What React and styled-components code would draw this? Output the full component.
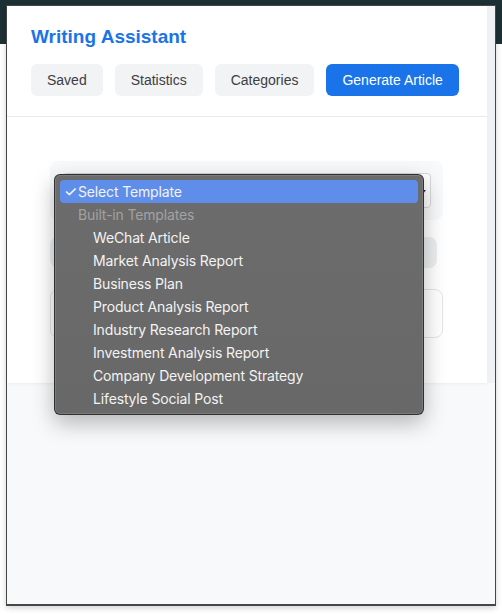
import React from 'react';
import styled, { createGlobalStyle } from 'styled-components';

const GlobalStyle = createGlobalStyle`
  html, body {
    margin: 0;
    padding: 0;
  }
  body {
    background: linear-gradient(#1d3034 0, #1d3034 44px, #ffffff 44px);
    font-family: "Liberation Sans", Arial, sans-serif;
    min-height: 614px;
  }
`;

const Window = styled.div`
  position: relative;
  box-sizing: border-box;
  width: 490px;
  height: 601px;
  margin: 5px 0 0 6px;
  border: 1px solid #474747;
  border-bottom-width: 2px;
  background: #f8f9fa;
  box-shadow: 0 2px 6px rgba(0, 0, 0, 0.18);
`;

const PanelRow = styled.div`
  display: flex;
`;

const Panel = styled.div`
  width: 480px;
  background: #ffffff;
  box-shadow: 0 1px 3px rgba(0, 0, 0, 0.05);
`;

const Gutter = styled.div`
  width: 8px;
  background: #eff1f4;
`;

const Header = styled.header`
  padding: 19px 24px 20px;
  border-bottom: 1px solid #e8eaed;
`;

const Title = styled.h1`
  margin: 0;
  font-size: 19px;
  line-height: 24px;
  font-weight: 700;
  color: #1a73e8;
`;

const Toolbar = styled.div`
  display: flex;
  gap: 12px;
  margin-top: 15px;
`;

const TabButton = styled.button`
  height: 32px;
  padding: 0 16px 1px;
  border: none;
  border-radius: 6px;
  font-family: "Liberation Sans", Arial, sans-serif;
  font-size: 14px;
  background: ${p => (p.$primary ? '#1a73e8' : '#f1f3f4')};
  color: ${p => (p.$primary ? '#ffffff' : '#3c4043')};
  cursor: pointer;
`;

const Content = styled.main`
  padding: 44px 44px 45px 43px;
  display: flex;
  flex-direction: column;
`;

const TemplateBox = styled.div`
  background: #f8f9fa;
  border-radius: 8px;
  padding: 12px;
`;

const SelectField = styled.div`
  position: relative;
  box-sizing: border-box;
  height: 35px;
  background: #ffffff;
  border: 1px solid #d5d7da;
  border-radius: 4px;

  &::after {
    content: '';
    position: absolute;
    right: 4px;
    top: 16px;
    border-left: 3px solid transparent;
    border-right: 3px solid transparent;
    border-top: 4px solid #333;
  }
`;

const ActionBar = styled.div`
  margin-top: 17px;
  width: 387px;
  height: 31px;
  border-radius: 8px;
  background: #eceef0;
`;

const InputBox = styled.div`
  box-sizing: border-box;
  margin-top: 21px;
  height: 49px;
  border: 1px solid #e3e5e8;
  border-radius: 8px;
  background: #ffffff;
`;

const Menu = styled.ul`
  position: absolute;
  left: 47px;
  top: 168px;
  box-sizing: border-box;
  width: 370px;
  margin: 0;
  padding: 5px 5px 4px;
  list-style: none;
  background: linear-gradient(#6c6c6c, #686868);
  border: 1px solid rgba(30, 30, 30, 0.75);
  border-radius: 6px;
  box-shadow: inset 0 0 0 1px rgba(255, 255, 255, 0.12), 0 8px 22px rgba(0, 0, 0, 0.28);
  font-family: Inter, "Noto Sans", sans-serif;
  font-size: 14px;
  letter-spacing: -0.15px;
`;

const MenuItem = styled.li`
  height: 23px;
  display: flex;
  align-items: center;
  border-radius: 4px;
  padding-left: ${p => (p.$kind === 'group' ? 18 : p.$kind === 'option' ? 33 : 4)}px;
  color: ${p => (p.$kind === 'group' ? '#a2a2a2' : '#f3f3f3')};
  background: ${p => (p.$active ? '#5e8ee9' : 'transparent')};
  white-space: nowrap;
`;

const Check = styled.span`
  width: 14px;
  font-size: 15px;
  color: #ffffff;
`;

const templates = [
  'WeChat Article',
  'Market Analysis Report',
  'Business Plan',
  'Product Analysis Report',
  'Industry Research Report',
  'Investment Analysis Report',
  'Company Development Strategy',
  'Lifestyle Social Post',
];

const tabs = ['Saved', 'Statistics', 'Categories'];

export default function App() {
  return (
    <>
      <GlobalStyle />
      <Window>
        <PanelRow>
          <Panel>
            <Header>
              <Title>Writing Assistant</Title>
              <Toolbar>
                {tabs.map(t => (
                  <TabButton key={t}>{t}</TabButton>
                ))}
                <TabButton $primary>Generate Article</TabButton>
              </Toolbar>
            </Header>
            <Content>
              <TemplateBox>
                <SelectField />
              </TemplateBox>
              <ActionBar />
              <InputBox />
            </Content>
          </Panel>
          <Gutter />
        </PanelRow>

        <Menu>
          <MenuItem $active>
            <Check>✓</Check>Select Template
          </MenuItem>
          <MenuItem $kind="group">Built-in Templates</MenuItem>
          {templates.map(t => (
            <MenuItem key={t} $kind="option">{t}</MenuItem>
          ))}
        </Menu>
      </Window>
    </>
  );
}
